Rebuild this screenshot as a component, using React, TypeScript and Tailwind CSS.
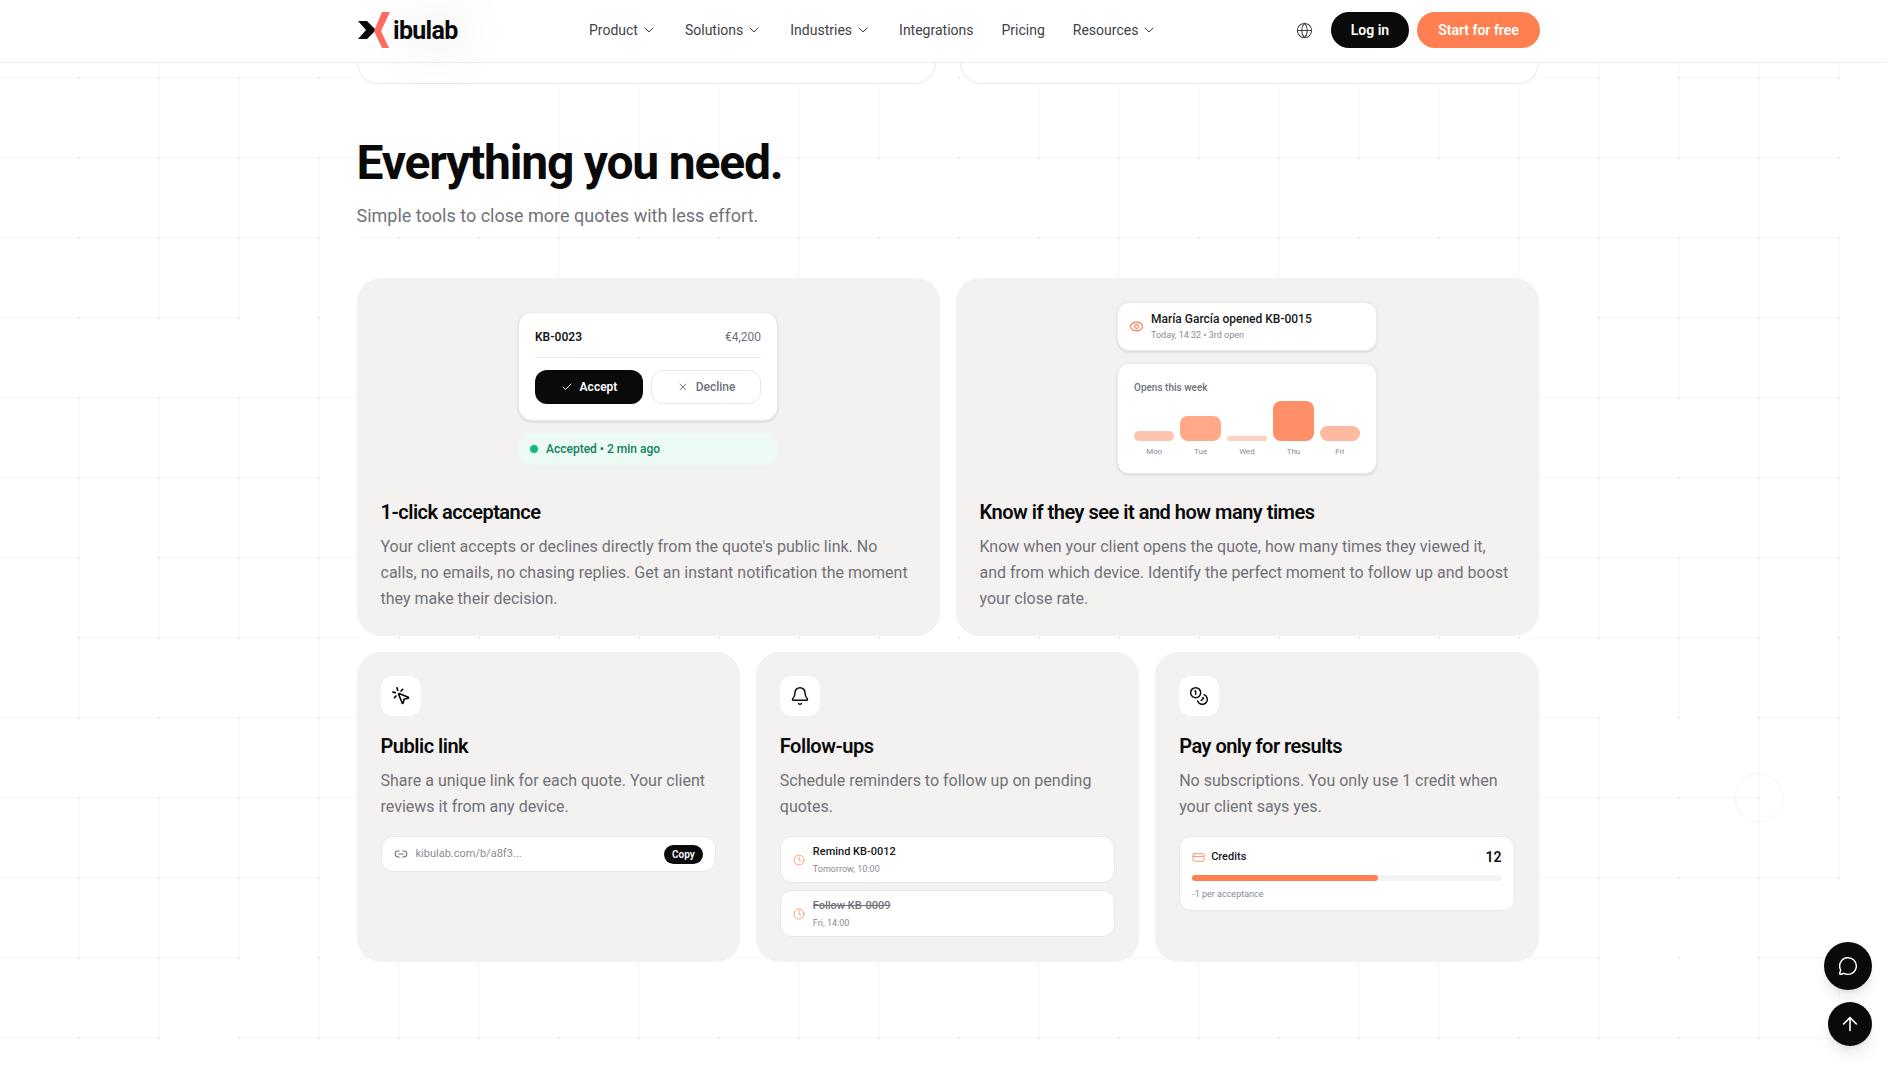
import { ArrowUp, Bell, Check, ChevronDown, Clock, Coins, CreditCard, Eye, Globe, Link2, MessageCircle, MousePointerClick, X } from "lucide-react";
import type { ReactNode } from "react";

const font = "font-['Roboto',sans-serif]";

const xs = Array.from({ length: 23 }, (_, i) => 79 + i * 80);
const ys = Array.from({ length: 13 }, (_, i) => 78 + i * 80);

// Faint line segments of the page background, [x1, y1, x2, y2]
const segments = [
  // left side, horizontal
  [0, 78, 360, 78], [0, 158, 360, 158], [0, 238, 319, 238], [0, 318, 239, 318], [0, 398, 360, 398],
  [0, 478, 319, 478], [0, 558, 79, 558], [159, 558, 360, 558], [79, 638, 360, 638], [0, 718, 360, 718],
  [0, 798, 360, 798], [0, 878, 319, 878], [0, 958, 239, 958], [0, 1038, 159, 1038], [239, 1038, 319, 1038],
  // left side, vertical
  [159, 62, 159, 318], [239, 78, 239, 318], [319, 158, 319, 1038],
  [79, 398, 79, 718], [79, 798, 79, 958], [159, 398, 159, 638], [159, 798, 159, 1038],
  [239, 398, 239, 638], [239, 718, 239, 958],
  // right side, horizontal
  [1530, 78, 1599, 78], [1679, 78, 1839, 78], [1530, 158, 1839, 158], [1530, 238, 1839, 238], [1599, 318, 1839, 318],
  [1530, 398, 1839, 398], [1530, 478, 1839, 478], [1530, 558, 1839, 558], [1530, 638, 1759, 638],
  [1530, 718, 1599, 718], [1759, 718, 1839, 718], [1530, 798, 1759, 798], [1530, 878, 1839, 878],
  [1530, 958, 1599, 958], [1759, 958, 1839, 958], [1530, 1038, 1839, 1038],
  // right side, vertical
  [1599, 62, 1599, 638], [1599, 718, 1599, 1038], [1679, 62, 1679, 158], [1679, 238, 1679, 398], [1679, 558, 1679, 718],
  [1759, 62, 1759, 1038], [1839, 62, 1839, 78], [1839, 238, 1839, 878], [1839, 958, 1839, 1038],
  // middle, above and below the cards
  [360, 158, 1530, 158], [360, 238, 1530, 238], [360, 958, 1530, 958], [319, 1038, 1530, 1038],
  [559, 84, 559, 278], [639, 84, 639, 158], [719, 84, 719, 158], [799, 84, 799, 278], [879, 84, 879, 158],
  [1039, 84, 1039, 158], [1119, 84, 1119, 278], [1199, 84, 1199, 158], [1279, 84, 1279, 278], [1359, 84, 1359, 158],
  [1439, 84, 1439, 158], [1519, 84, 1519, 278],
  [399, 960, 399, 1038], [479, 960, 479, 1038], [639, 960, 639, 1038], [799, 960, 799, 1038], [879, 960, 879, 1038],
  [1039, 960, 1039, 1038], [1199, 960, 1199, 1038], [1359, 960, 1359, 1038], [1439, 960, 1439, 1038],
];

function GridBackground() {
  return (
    <svg className="absolute inset-0 w-full h-[1069px]" width="1887" height="1069">
      {segments.map(([x1, y1, x2, y2], i) => (
        <line key={i} x1={x1} y1={y1} x2={x2} y2={y2} stroke="#f5f5f5" strokeWidth="1" />
      ))}
      {ys.map((y) => xs.map((x) => <rect key={`${x}-${y}`} x={x - 1} y={y - 1} width="2" height="2" fill="#ebebeb" />))}
      <circle cx="1759" cy="798" r="24" fill="none" stroke="#f4f4f4" />
    </svg>
  );
}

function Logo() {
  return (
    <div className="flex items-center w-[102px] h-10 relative">
      <div className="absolute left-[50px] top-0 w-[60px] h-[44px] rounded-full bg-black/5 blur-xl" />
      <svg width="37" height="40" viewBox="0 0 37 40" className="relative shrink-0">
        <path d="M1 11h9l9 9-9 9H1l8-9z" fill="#0a0a0a" />
        <path d="M25 2h8l-9 19 8 17h-7l-8-17z" fill="#ff6b61" />
      </svg>
      <span className="relative text-[25px] font-bold tracking-[-0.7px] text-[#0a0a0a] -ml-[1px] mt-px leading-none">ibulab</span>
    </div>
  );
}

function NavItem({ label, menu = true }: { label: string; menu?: boolean }) {
  return (
    <div className="flex items-center gap-[3px] text-[14px] font-normal text-[#3f3f46]">
      {label}
      {menu && <ChevronDown size={16} strokeWidth={1.5} />}
    </div>
  );
}

function Header() {
  return (
    <header className="relative z-10 h-[63px] bg-white border-b border-[#ececec]">
      <div className="w-[1183px] ml-[357px] h-[60px] flex items-center">
        <Logo />
        <nav className="flex items-center gap-[28px] ml-[130px]">
          <NavItem label="Product" />
          <NavItem label="Solutions" />
          <NavItem label="Industries" />
          <NavItem label="Integrations" menu={false} />
          <NavItem label="Pricing" menu={false} />
          <NavItem label="Resources" />
        </nav>
        <div className="ml-auto flex items-center">
          <Globe size={17} strokeWidth={1.5} className="text-[#3f3f46] mr-[18px]" />
          <button className="w-[78px] h-9 rounded-full bg-[#0a0a0a] text-white text-[14px] font-semibold">Log in</button>
          <button className="w-[123px] h-9 ml-2 rounded-full bg-[#ff7f50] text-white text-[14px] font-semibold">Start for free</button>
        </div>
      </div>
    </header>
  );
}

function Card({ title, text, children, wide }: { title: string; text: string; children?: ReactNode; wide?: boolean }) {
  return (
    <div className={`bg-[#f3f2f0] rounded-[24px] px-6 pt-6 flex flex-col ${wide ? "h-[358px]" : "h-[310px]"}`}>
      {children}
      <h3 className="text-[20px] leading-7 font-semibold tracking-[-0.5px] text-[#0a0a0a]">{title}</h3>
      <p className="mt-[8px] text-[16px] leading-[26px] text-[#71717a]">{text}</p>
    </div>
  );
}

function AcceptDemo() {
  return (
    <div className="w-[260px] mx-auto pt-[10px]">
      <div className="bg-white rounded-[14px] border border-[#ebebeb] shadow-sm px-4 pt-4 pb-4">
        <div className="flex justify-between items-center h-4 text-[12px]">
          <span className="font-semibold text-[#18181b]">KB-0023</span>
          <span className="text-[#71717a]">€4,200</span>
        </div>
        <div className="h-px bg-[#e8e8e8] mt-3" />
        <div className="flex gap-2 mt-3">
          <div className="w-[108px] h-[34px] rounded-[12px] bg-[#0a0a0a] text-white text-[12px] font-semibold flex items-center justify-center gap-[7px]">
            <Check size={12} strokeWidth={2} /> Accept
          </div>
          <div className="flex-1 h-[34px] rounded-[12px] border border-[#e6e6e6] text-[#71717a] text-[12px] font-medium flex items-center justify-center gap-[7px]">
            <X size={12} strokeWidth={1.75} /> Decline
          </div>
        </div>
      </div>
      <div className="mt-[12px] h-8 rounded-[12px] bg-[#ebfbf4] flex items-center pl-3 gap-2 text-[12px] font-medium text-[#0f7f5c]">
        <span className="w-2 h-2 rounded-full bg-[#10b981]" />
        Accepted • 2 min ago
      </div>
    </div>
  );
}

const bars = [
  { day: "Mon", h: "h-[10px]", color: "bg-[#ffc4b0]", r: "rounded-[8px]" },
  { day: "Tue", h: "h-[25px]", color: "bg-[#ffa98a]", r: "rounded-[8px]" },
  { day: "Wed", h: "h-[5px]", color: "bg-[#ffd0c0]", r: "rounded-[3px]" },
  { day: "Thu", h: "h-[40px]", color: "bg-[#ff8f68]", r: "rounded-[8px]" },
  { day: "Fri", h: "h-[15px]", color: "bg-[#ffb9a1]", r: "rounded-[8px]" },
];

function OpensDemo() {
  return (
    <div className="w-[260px] mx-auto">
      <div className="h-[49px] bg-white rounded-[12px] border border-[#ebebeb] shadow-sm flex items-center pl-[11px] gap-[7px]">
        <Eye size={15} strokeWidth={1.75} className="text-[#ff7f50]" />
        <div>
          <div className="text-[12px] leading-4 font-medium text-[#18181b]">María García opened KB-0015</div>
          <div className="text-[9px] leading-4 text-[#8a8a93]">Today, 14:32 • 3rd open</div>
        </div>
      </div>
      <div className="mt-[12px] h-[111px] bg-white rounded-[12px] border border-[#ebebeb] shadow-sm px-4 pt-[17px]">
        <div className="text-[10px] leading-[14px] font-medium text-[#71717a]">Opens this week</div>
        <div className="flex gap-[6px] items-end h-[40px] mt-[6px]">
          {bars.map((b) => (
            <div key={b.day} className={`flex-1 ${b.h} ${b.color} ${b.r}`} />
          ))}
        </div>
        <div className="flex gap-[6px] mt-[5px]">
          {bars.map((b) => (
            <div key={b.day} className="flex-1 text-center text-[8px] leading-[12px] text-[#8a8a93]">{b.day}</div>
          ))}
        </div>
      </div>
    </div>
  );
}

function IconTile({ children }: { children: ReactNode }) {
  return <div className="w-10 h-10 rounded-[12px] bg-white flex items-center justify-center mb-4 text-[#0a0a0a]">{children}</div>;
}

function Reminder({ title, time, done }: { title: string; time: string; done?: boolean }) {
  return (
    <div className="h-[47px] bg-white rounded-[12px] border border-[#e8e8e8] flex items-center pl-3 gap-2">
      <Clock size={12} strokeWidth={1.75} className="text-[#ff8f68]" />
      <div>
        <div className={`text-[11px] leading-[18px] font-medium ${done ? "text-[#71717a] line-through" : "text-[#18181b]"}`}>{title}</div>
        <div className="text-[9px] leading-[16px] text-[#8a8a93]">{time}</div>
      </div>
    </div>
  );
}

export default function App() {
  return (
    <div className={`relative h-[1069px] overflow-hidden bg-white ${font}`}>
      <GridBackground />
      <Header />

      <main className="relative w-[1182px] ml-[356.5px]">
        {/* cards of the section above, scrolled under the header */}
        <div className="grid grid-cols-2 gap-6 h-[21px]">
          <div className="bg-white border border-t-0 border-[#e8e8e8] rounded-b-[32px]" />
          <div className="bg-white border border-t-0 border-[#e8e8e8] rounded-b-[32px]" />
        </div>

        <h2 className="mt-[49px] text-[48px] leading-[60px] font-bold tracking-[-1.2px] text-[#0a0a0a]">Everything you need.</h2>
        <p className="mt-[9px] text-[18px] leading-7 text-[#71717a]">Simple tools to close more quotes with less effort.</p>

        <div className="grid grid-cols-2 gap-4 mt-[48px]">
          <Card
            wide
            title="1-click acceptance"
            text="Your client accepts or declines directly from the quote's public link. No calls, no emails, no chasing replies. Get an instant notification the moment they make their decision."
          >
            <div className="h-[196px]"><AcceptDemo /></div>
          </Card>
          <Card
            wide
            title="Know if they see it and how many times"
            text="Know when your client opens the quote, how many times they viewed it, and from which device. Identify the perfect moment to follow up and boost your close rate."
          >
            <div className="h-[196px]"><OpensDemo /></div>
          </Card>
        </div>

        <div className="grid grid-cols-3 gap-4 mt-4">
          <Card title="Public link" text="Share a unique link for each quote. Your client reviews it from any device.">
            <IconTile><MousePointerClick size={20} strokeWidth={2} /></IconTile>
            <div className="order-last mt-4 h-[36px] bg-white rounded-[12px] border border-[#e8e8e8] flex items-center pl-3 pr-3">
              <Link2 size={14} strokeWidth={1.75} className="text-[#71717a]" />
              <span className="ml-[8px] text-[11px] text-[#8a8a93]">kibulab.com/b/a8f3...</span>
              <span className="ml-auto w-[39px] h-[19px] rounded-full bg-[#0a0a0a] text-white text-[10px] font-semibold flex items-center justify-center">Copy</span>
            </div>
          </Card>
          <Card title="Follow-ups" text="Schedule reminders to follow up on pending quotes.">
            <IconTile><Bell size={20} strokeWidth={1.75} /></IconTile>
            <div className="order-last mt-4 flex flex-col gap-[7px]">
              <Reminder title="Remind KB-0012" time="Tomorrow, 10:00" />
              <Reminder title="Follow KB-0009" time="Fri, 14:00" done />
            </div>
          </Card>
          <Card title="Pay only for results" text="No subscriptions. You only use 1 credit when your client says yes.">
            <IconTile><Coins size={20} strokeWidth={1.75} /></IconTile>
            <div className="order-last mt-4 h-[75px] bg-white rounded-[12px] border border-[#e8e8e8] px-3 pt-3">
              <div className="flex items-center h-4">
                <CreditCard size={13} strokeWidth={1.75} className="text-[#ff8f68]" />
                <span className="ml-[6px] text-[11px] font-medium text-[#18181b]">Credits</span>
                <span className="ml-auto text-[14px] font-semibold text-[#0a0a0a]">12</span>
              </div>
              <div className="mt-[10px] h-[6px] rounded-full bg-[#f3f3f3]">
                <div className="h-full w-[60%] rounded-full bg-[#ff7f50]" />
              </div>
              <div className="mt-[7px] text-[9px] leading-[12px] text-[#8a8a93]">-1 per acceptance</div>
            </div>
          </Card>
        </div>
      </main>

      {/* floating buttons */}
      <button className="absolute left-[1824px] top-[942px] w-12 h-12 rounded-full bg-[#0a0a0a] text-white flex items-center justify-center shadow-lg">
        <MessageCircle size={20} strokeWidth={1.75} />
      </button>
      <button className="absolute left-[1828px] top-[1002px] w-11 h-11 rounded-full bg-[#0a0a0a] text-white flex items-center justify-center shadow-lg">
        <ArrowUp size={22} strokeWidth={1.75} />
      </button>
    </div>
  );
}
